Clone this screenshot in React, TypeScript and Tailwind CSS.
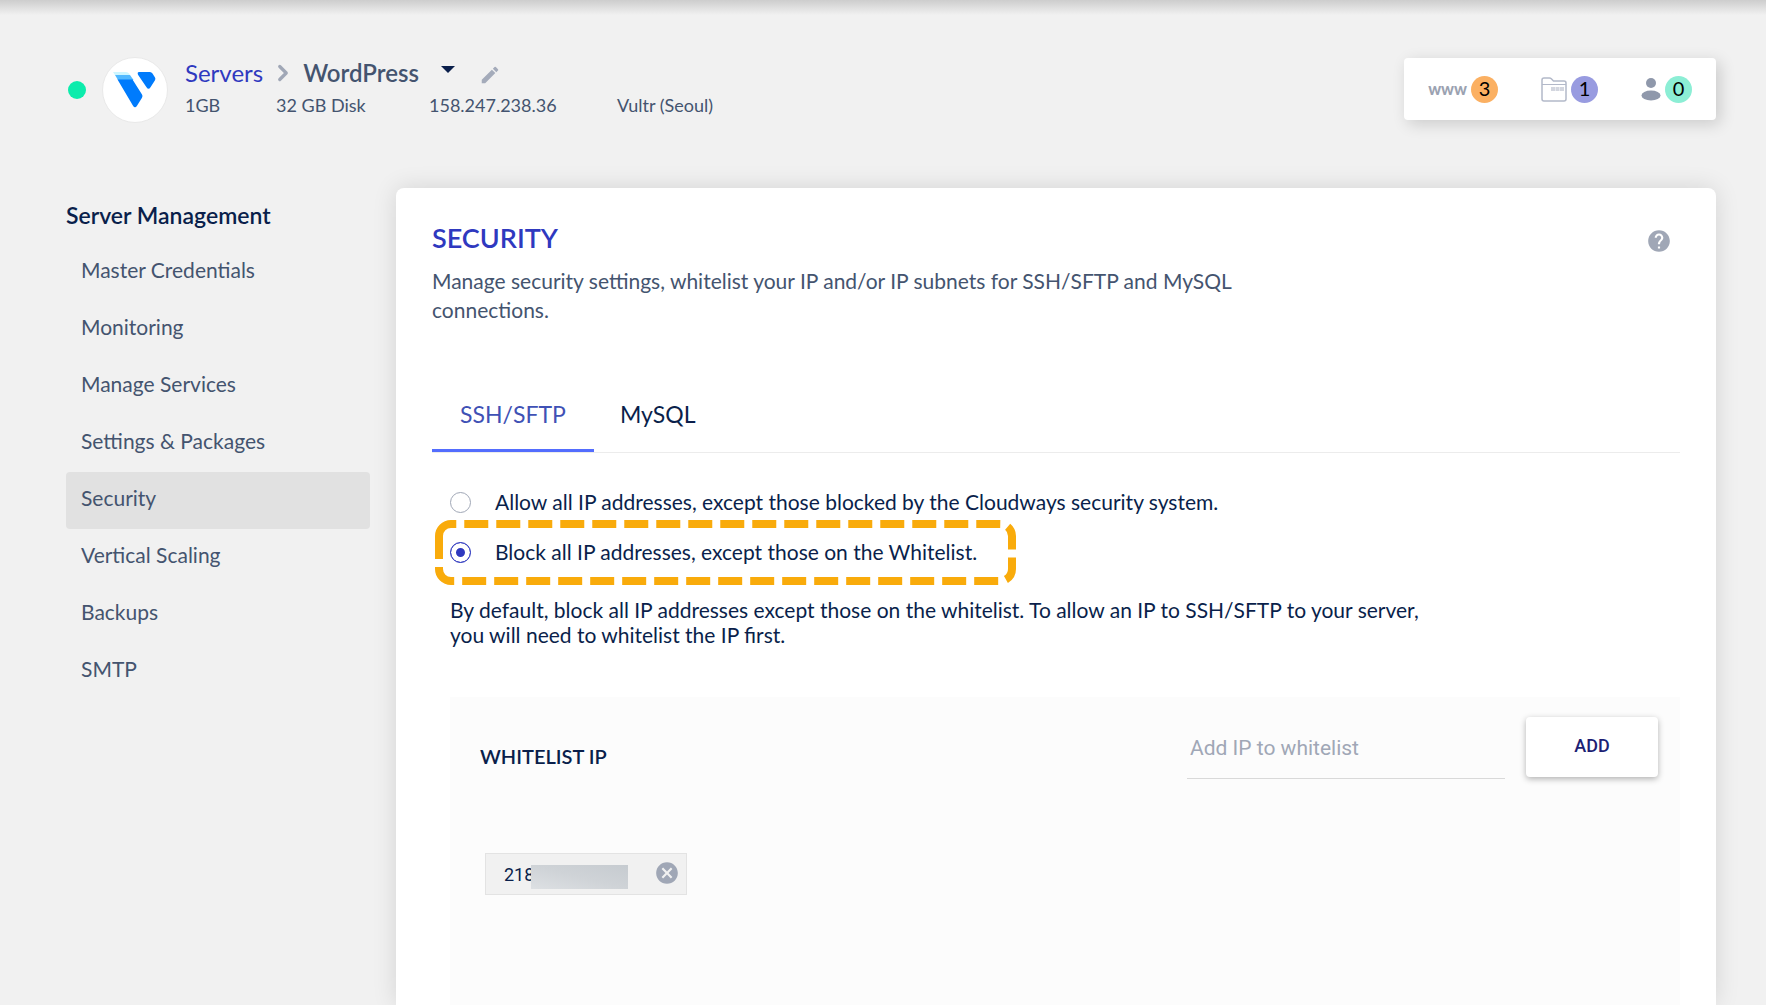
import { useState } from 'react';
import { ChevronRight } from 'lucide-react';
import { MdCancel, MdEdit, MdHelp } from 'react-icons/md';

const NAV_ITEMS = [
  'Master Credentials',
  'Monitoring',
  'Manage Services',
  'Settings & Packages',
  'Security',
  'Vertical Scaling',
  'Backups',
  'SMTP'
];

const RULES = [
  { id: 'allow', label: 'Allow all IP addresses, except those blocked by the Cloudways security system.' },
  { id: 'block', label: 'Block all IP addresses, except those on the Whitelist.' }
];

function VultrLogo() {
  return (
    <svg viewBox="0 0 44 38" className="h-[38px] w-11" aria-hidden="true">
      <path d="M0 1h13q2 0 3 1.500l1 1.500H2z" fill="#cdf6ff" />
      <path d="M2 4h15l3.500 5H5z" fill="#51b9ff" />
      <path d="M4.500 8.500h15l9.500 15q1 1.500 0 3.200l-5 8q-2 3-4 0z" fill="#007bfc" />
      <path d="M26 1h11q1.500 0 2.500 1.500l2.500 4q.8 1.300 0 2.700l-4.500 7q-2 3-4 0l-8.500-12.500q-1-2.700 1-2.700z" fill="#007bfc" />
    </svg>
  );
}

function FolderIcon() {
  return (
    <svg viewBox="0 0 26 25" className="h-[25px] w-[26px]" fill="none" stroke="#b3b9c9" strokeWidth="1.500" aria-hidden="true">
      <path d="M1 22V3q0-2 2-2h5.500q1 0 1.800.8L12.500 4H23q2 0 2 2v16q0 2-2 2H3q-2 0-2-2z" />
      <path d="M1 7.500h24" strokeWidth="1" />
      <path d="M10 12h13" strokeWidth="4" strokeDasharray="4 .5" stroke="#d3d6df" />
    </svg>
  );
}

function UserIcon() {
  return (
    <svg viewBox="0 0 20 24" className="h-6 w-5" fill="#8f98ab" aria-hidden="true">
      <circle cx="10" cy="6" r="5" />
      <ellipse cx="10" cy="18.500" rx="9.500" ry="5" />
    </svg>
  );
}

function Header() {
  return (
    <header className="flex items-start justify-between pl-[2px]">
      <div className="flex items-center">
        <span className="h-[18px] w-[18px] rounded-full bg-[#0cecac]" />
        <div className="ml-4 flex h-[66px] w-[66px] items-center justify-center rounded-full border border-[#e9e9e9] bg-white">
          <VultrLogo />
        </div>
        <div className="ml-[17px] pb-[2px]">
          <div className="flex h-8 items-center">
            <a href="#servers" className="text-2xl text-[#2f39bf]">Servers</a>
            <ChevronRight className="mx-[7px] h-[26px] w-[26px] text-[#a0a7b6]" strokeWidth={3} />
            <span className="text-2xl font-semibold text-[#44546f]">WordPress</span>
            <button type="button" aria-label="Switch server" className="ml-[22px] pb-2">
              <span className="block border-x-[7px] border-t-[7px] border-x-transparent border-t-[#0a1f4b]" />
            </button>
            <button type="button" aria-label="Rename server" className="ml-6 pt-1 text-[#a4abba]">
              <MdEdit className="h-[22px] w-[22px]" />
            </button>
          </div>
          <div className="flex h-8 items-center text-lg text-[#44546f]">
            <span className="w-[91px]">1GB</span>
            <span className="w-[153px]">32 GB Disk</span>
            <span className="w-[188px]">158.247.238.36</span>
            <span>Vultr (Seoul)</span>
          </div>
        </div>
      </div>

      <div className="mt-px flex h-[62px] items-center gap-[43px] rounded bg-white px-6 text-xl text-black shadow-[4px_4px_16px_rgba(0,0,0,0.16)]">
        <a href="#apps" className="flex items-center gap-1">
          <span className="text-base font-black text-[#9ba2b1]">www</span>
          <span className="flex h-[27px] w-[27px] items-center justify-center rounded-full bg-[#fbb062] pb-[2px]">3</span>
        </a>
        <a href="#projects" className="flex items-center gap-1">
          <FolderIcon />
          <span className="flex h-[27px] w-[27px] items-center justify-center rounded-full bg-[#989be0] pb-[2px]">1</span>
        </a>
        <a href="#team" className="flex items-center gap-1">
          <UserIcon />
          <span className="flex h-[27px] w-[27px] items-center justify-center rounded-full bg-[#8ceed5] pb-[2px]">0</span>
        </a>
      </div>
    </header>
  );
}

function Sidebar() {
  return (
    <nav className="w-[304px] shrink-0 pt-[11px]">
      <h2 className="mb-[13px] text-[23px] leading-8 font-semibold text-[#0a1f4b]">Server Management</h2>
      {NAV_ITEMS.map((item) => (
        <a
          key={item}
          href="#nav"
          className={
            item === 'Security'
              ? 'flex h-[57px] items-center rounded bg-[#e1e1e1] px-[15px] pb-[6px] text-[21px] text-[#44546f]'
              : 'flex h-[57px] items-center rounded px-[15px] pb-[6px] text-[21px] text-[#44546f]'
          }
        >
          {item}
        </a>
      ))}
    </nav>
  );
}

function Highlight() {
  return (
    <svg
      viewBox="0 0 581 65"
      className="pointer-events-none absolute -top-[7px] -left-[15px] h-[65px] w-[581px]"
      fill="none"
      stroke="#f9ab0b"
      strokeWidth="8"
      strokeDasharray="24 8"
      aria-hidden="true"
    >
      <path d="M4 16A12 12 0 0 1 16 4H565A12 12 0 0 1 577 16V49A12 12 0 0 1 565 61H16A12 12 0 0 1 4 49V16" />
    </svg>
  );
}

function Whitelist() {
  return (
    <section className="ml-[18px] grow bg-[#fcfcfc] px-[30px] pt-5">
      <div className="-mr-2 flex justify-between">
        <h3 className="pt-[23px] text-xl leading-8 font-semibold text-[#0a1f4b]">WHITELIST IP</h3>
        <form className="flex items-start gap-[21px]" onSubmit={(e) => e.preventDefault()}>
          <input
            type="text"
            aria-label="Add IP to whitelist"
            placeholder="Add IP to whitelist"
            className="h-[62px] w-[318px] border-b border-[#d9d9d9] bg-transparent px-[3px] font-[Roboto,sans-serif] text-[21px] text-[#0a1f4b] outline-none placeholder:text-[#a0a7b6]"
          />
          <button
            type="submit"
            className="h-[60px] w-[132px] rounded bg-white pb-[2px] font-[Roboto,sans-serif] text-lg font-medium text-[#1d1f74] shadow-[0_2px_6px_rgba(0,0,0,0.3)]"
          >
            ADD
          </button>
        </form>
      </div>

      <div className="mt-[74px] ml-[5px] flex h-[42px] w-[202px] items-center justify-between border border-[#e3e3e3] bg-[#f1f1f1] pr-[6px] pl-[18px]">
        <div className="flex items-center pt-px font-[Roboto,sans-serif] text-lg text-[#0a1f4b]">
          <span>218</span>
          <span className="relative mt-1 -ml-[3px] h-6 w-[97px] bg-linear-to-tr from-[#dde0e3] via-[#cfd3d7] to-[#c6cbd0]" />
        </div>
        <button type="button" aria-label="Remove IP" className="pb-[2px] text-[#a0a7b6]">
          <MdCancel className="h-[26px] w-[26px]" />
        </button>
      </div>
    </section>
  );
}

export default function App() {
  const [rule, setRule] = useState('block');

  return (
    <div className="flex min-h-screen flex-col bg-[#f1f1f1] px-[50px] font-[Lato,sans-serif]">
      <div className="-mx-[50px] mb-[42px] h-[15px] bg-linear-to-b from-[#cdcdcd] to-[#f1f1f1]" />
      <div className="flex grow flex-col pl-4">
        <Header />
        <div className="mt-[65px] flex grow gap-[26px]">
          <Sidebar />
          <main className="flex grow flex-col rounded-t-lg bg-white px-9 pt-[34px] shadow-[0_0_24px_rgba(0,0,0,0.12)]">
            <div className="flex items-start justify-between">
              <h1 className="text-[27px] leading-8 font-semibold text-[#2f39bf]">SECURITY</h1>
              <button type="button" aria-label="Help" className="h-8 pt-[6px] pr-2 text-[#a0a7b6]">
                <MdHelp className="h-[26px] w-[26px]" />
              </button>
            </div>
            <p className="mt-3 max-w-[830px] text-[21px] leading-[29px] text-[#44546f]">
              Manage security settings, whitelist your IP and/or IP subnets for SSH/SFTP and MySQL connections.
            </p>

            <div role="tablist" className="mt-[54px] flex h-[75px] border-b border-[#ececec] text-[23px]">
              <button
                type="button"
                role="tab"
                aria-selected="true"
                className="w-[162px] border-b-[3px] border-[#536dfe] pt-[2px] text-[#3f51b5]"
              >
                SSH/SFTP
              </button>
              <button
                type="button"
                role="tab"
                aria-selected="false"
                className="border-b-[3px] border-transparent px-[26px] pt-[2px] text-[#0a1f4b]"
              >
                MySQL
              </button>
            </div>

            <div className="mt-6 ml-[18px] flex flex-col text-[21px] text-[#0a1f4b]">
              {RULES.map((r) => (
                <div key={r.id} className="relative flex h-[50px] items-center">
                  <input
                    type="radio"
                    id={r.id}
                    name="rule"
                    checked={rule === r.id}
                    onChange={() => setRule(r.id)}
                    className="h-[21px] w-[21px] appearance-none rounded-full border border-[#a0a7b6] checked:border-[#2f39bf] checked:bg-[#2f39bf] checked:shadow-[inset_0_0_0_5px_#fff]"
                  />
                  <label htmlFor={r.id} className="ml-6 pb-px">{r.label}</label>
                  {r.id === 'block' && <Highlight />}
                </div>
              ))}
            </div>

            <p className="mt-5 mb-[50px] ml-[18px] max-w-[980px] text-[21px] leading-[25px] text-[#0a1f4b]">
              By default, block all IP addresses except those on the whitelist. To allow an IP to SSH/SFTP to your server, you will
              need to whitelist the IP first.
            </p>

            <Whitelist />
          </main>
        </div>
      </div>
    </div>
  );
}
